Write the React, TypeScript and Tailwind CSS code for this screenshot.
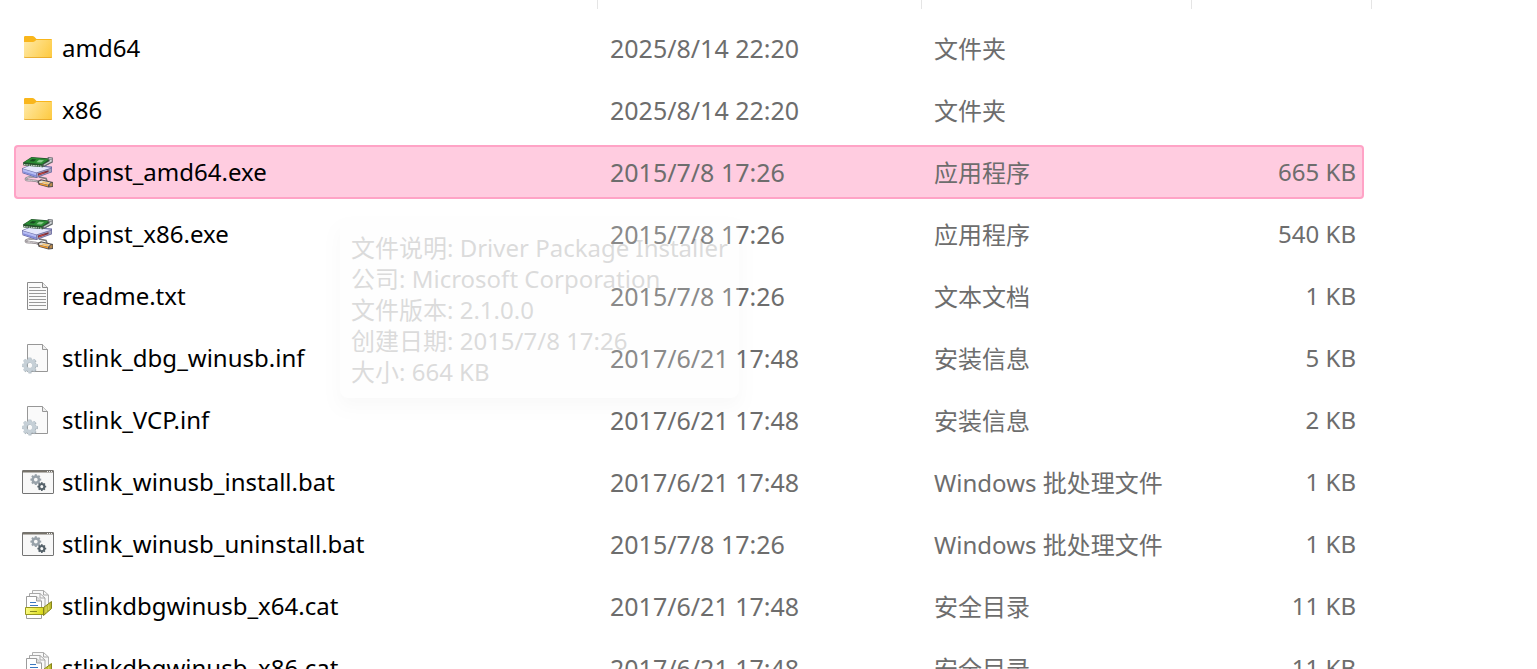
import { ReactNode } from "react";
import clsx from "clsx";

type FileKind = "folder" | "exe" | "txt" | "inf" | "bat" | "cat";

type FileItem = {
  name: string;
  date: string;
  type: string;
  size?: string;
  kind: FileKind;
};

const files: FileItem[] = [
  { name: "amd64", date: "2025/8/14 22:20", type: "文件夹", kind: "folder" },
  { name: "x86", date: "2025/8/14 22:20", type: "文件夹", kind: "folder" },
  { name: "dpinst_amd64.exe", date: "2015/7/8 17:26", type: "应用程序", size: "665 KB", kind: "exe" },
  { name: "dpinst_x86.exe", date: "2015/7/8 17:26", type: "应用程序", size: "540 KB", kind: "exe" },
  { name: "readme.txt", date: "2015/7/8 17:26", type: "文本文档", size: "1 KB", kind: "txt" },
  { name: "stlink_dbg_winusb.inf", date: "2017/6/21 17:48", type: "安装信息", size: "5 KB", kind: "inf" },
  { name: "stlink_VCP.inf", date: "2017/6/21 17:48", type: "安装信息", size: "2 KB", kind: "inf" },
  { name: "stlink_winusb_install.bat", date: "2017/6/21 17:48", type: "Windows 批处理文件", size: "1 KB", kind: "bat" },
  { name: "stlink_winusb_uninstall.bat", date: "2015/7/8 17:26", type: "Windows 批处理文件", size: "1 KB", kind: "bat" },
  { name: "stlinkdbgwinusb_x64.cat", date: "2017/6/21 17:48", type: "安全目录", size: "11 KB", kind: "cat" },
  { name: "stlinkdbgwinusb_x86.cat", date: "2017/6/21 17:48", type: "安全目录", size: "11 KB", kind: "cat" },
];

const selected = "dpinst_amd64.exe";

const details = [
  "文件说明: Driver Package Installer",
  "公司: Microsoft Corporation",
  "文件版本: 2.1.0.0",
  "创建日期: 2015/7/8 17:26",
  "大小: 664 KB",
];

function Svg({ children }: { children: ReactNode }) {
  return (
    <svg viewBox="0 0 32 32" className="h-8 w-8 shrink-0" fill="none" aria-hidden="true">
      {children}
    </svg>
  );
}

function Gear({ x, y, r, color }: { x: number; y: number; r: number; color: string }) {
  return (
    <g transform={`translate(${x} ${y})`}>
      <circle r={r * 0.58} stroke={color} strokeWidth={r * 0.46} />
      {[0, 45, 90, 135, 180, 225, 270, 315].map((angle) => (
        <rect
          key={angle}
          x={-r * 0.19}
          y={-r}
          width={r * 0.38}
          height={r * 0.36}
          fill={color}
          transform={`rotate(${angle})`}
        />
      ))}
    </g>
  );
}

function FolderIcon() {
  return (
    <Svg>
      <defs>
        <linearGradient id="folder" x1="2" y1="8" x2="30" y2="26" gradientUnits="userSpaceOnUse">
          <stop stopColor="#ffe9a6" />
          <stop offset="1" stopColor="#fdc93e" />
        </linearGradient>
      </defs>
      <path d="M2 5.2Q2 4 3.2 4H10.5Q11.5 4 12.3 4.8L14.5 7H29Q30 7 30 8V12H2Z" fill="#f9b61b" />
      <path d="M2 10H11Q12 10 12.8 9.3L14.2 8H30V25Q30 26 29 26H3Q2 26 2 25Z" fill="url(#folder)" />
      <path d="M2 24.6Q2 26 3 26H29Q30 26 30 24.6L29 25.2H3Z" fill="#e5a321" />
    </Svg>
  );
}

function InstallerIcon() {
  return (
    <Svg>
      {/* cable and plug */}
      <path d="M15 20.5C9 20.5 3 21.5 3.8 23.6C5 26 11 22.5 18 26.5" stroke="#8b8589" strokeWidth="2.2" />
      <path d="M15 20.5C9 20.5 3 21.5 3.8 23.6C5 26 11 22.5 18 26.5" stroke="#c9c4c8" strokeWidth="1" />
      <path d="M17 21L24 22.5L25 25" stroke="#77777c" strokeWidth="1.6" />
      <path d="M15.5 25L19 23.2L31 26V31L26.5 31.5L16.5 28.8Z" fill="#55504f" />
      <path d="M17 25.6L19.5 24.4L28.5 26.6L26 28.8L17 26.8Z" fill="#e2dcd3" />
      <path d="M17.5 27L26 29V30.6L18 28.6Z" fill="#f29a2c" />
      <path d="M21 25.4L27.6 26.8L26 28.2L20 26.8Z" fill="#f8c46c" />
      <path d="M27.8 27.8L30.3 26.8V30L27.4 30.6Z" fill="#b98a4c" />
      {/* drive box */}
      <path d="M0 12.2L8 9L30 10.5V16.2L14.5 22L0.5 17.2Z" fill="#6a6ba3" />
      <path d="M0.8 12.4L8.5 9.5L29.2 11.8L14.3 16.4Z" fill="#e5e8fd" />
      <path d="M0.8 13L14.2 17V21L1 16.6Z" fill="#b6bcf3" />
      <path d="M0.9 15.2L14.2 19.2V21L1 16.6Z" fill="#838bd9" />
      <path d="M14.8 17L29.3 12.4V15.8L14.8 21.1Z" fill="#a3a1bb" />
      <path d="M16 17.6L26.5 14.3V16L16 19.7Z" fill="#7b2b38" />
      <path d="M16.8 18L22.5 16.2V17L16.8 19Z" fill="#de5245" />
      {/* circuit board */}
      <path d="M1 6.5L9.5 1L28.5 2.5L28 7.5L20.8 11.2L1.5 9.5Z" fill="#24502b" />
      <path d="M2 6.2L9.8 1.6L26.8 3.2L20 8.2Z" fill="#2b8c34" />
      <path d="M10.2 3L14.4 3.5L11.8 5.6L7.4 5.2Z" fill="#174e20" />
      <path d="M17 3.8L22 4.2L19.2 6.6L14.4 6.2Z" fill="#8acb8c" />
      <path d="M2 8.6L20.2 10.3" stroke="#dce3da" strokeWidth="1" strokeDasharray="1.6 0.7" />
      <path d="M25.5 1L30.8 1.6V6.4L23.5 10L20.5 11.2V8.4L27 5Z" fill="#666b6e" />
      <path d="M26.8 2L29.8 2.3V5.6L22 9.6V8.6L28 5Z" fill="#cfd3d5" />
      <path d="M26.5 3.2L29.8 3.6" stroke="#7d8285" strokeWidth="0.8" />
    </Svg>
  );
}

function TextIcon() {
  return (
    <Svg>
      <path d="M5.5 2.5H20.5L25.5 7.5V29.5H5.5Z" fill="#fafafa" stroke="#8b8b8b" />
      <path d="M20.5 2.5V7.5H25.5" fill="#eee" stroke="#8b8b8b" />
      <path
        d="M7 7.5H18.5M7 10.5H24M7 13.5H24M7 16.5H24M7 19.5H24M7 22.5H24M7 25.5H24"
        stroke="#999"
      />
    </Svg>
  );
}

function SetupIcon() {
  return (
    <Svg>
      <path d="M5.5 2.5H20.5L25.5 7.5V29.5H5.5Z" fill="#fafafa" stroke="#979797" />
      <path d="M20.5 2.5V7.5H25.5" fill="#eee" stroke="#979797" />
      <Gear x={8} y={23.6} r={7.8} color="#a5b0b8" />
      <Gear x={7.4} y={23.2} r={7.6} color="#c6d0d7" />
    </Svg>
  );
}

function BatchIcon() {
  return (
    <Svg>
      <rect x="0.5" y="4.5" width="31" height="23" rx="0.5" fill="#f8f8f8" stroke="#747474" />
      <path d="M0.5 5.5H31.5" stroke="#77736a" strokeWidth="2" />
      <path d="M25 5.5H30.5" stroke="#eee" strokeDasharray="1 1" />
      <Gear x={13.8} y={13.6} r={5.4} color="#98a2aa" />
      <Gear x={19.8} y={20.6} r={4.4} color="#56626a" />
    </Svg>
  );
}

function CatalogIcon() {
  return (
    <Svg>
      <defs>
        <linearGradient id="catalog" x1="3" y1="18" x2="21" y2="26" gradientUnits="userSpaceOnUse">
          <stop stopColor="#ffff8e" />
          <stop offset="1" stopColor="#d6d60f" />
        </linearGradient>
      </defs>
      <path d="M10.5 0.5H21.5L26.5 5V19H10.5Z" fill="#f8f8f8" stroke="#b0b0b0" />
      <path d="M7.5 3.5H18L23 8V22H7.5Z" fill="#fafafa" stroke="#a8a8a8" />
      <path d="M18 3.5V8H23M21.5 0.5V5H26.5" stroke="#a8a8a8" />
      <path d="M4.5 6.5H14.5L19.5 11V28.5H4.5Z" fill="#fff" stroke="#9c9c9c" />
      <path d="M14.5 6.5V11H19.5" fill="#ddd" stroke="#9c9c9c" />
      <path d="M8 12.5H14M8 15.5H16" stroke="#3b78c0" />
      <path d="M3.5 17.5H21.5V24.5H3.5Z" fill="url(#catalog)" stroke="#98971e" />
      <path d="M21.5 17.5L29.5 11.5V18.5L21.5 25.5Z" fill="#bcba2b" stroke="#85841b" />
      <path d="M24 16.5V22.5M26.8 14.5V20" stroke="#e2e06c" />
      <path d="M8 21.5H15" stroke="#8a8a1a" />
    </Svg>
  );
}

const icons: Record<FileKind, () => ReactNode> = {
  folder: FolderIcon,
  exe: InstallerIcon,
  txt: TextIcon,
  inf: SetupIcon,
  bat: BatchIcon,
  cat: CatalogIcon,
};

function ColumnDividers() {
  return (
    <div className="mr-[165px] flex h-[9px]">
      <div className="grow border-r border-[#e5e5e5]" />
      <div className="w-[324px] border-r border-[#e5e5e5]" />
      <div className="w-[270px] border-r border-[#e5e5e5]" />
      <div className="w-[180px] border-r border-[#e5e5e5]" />
    </div>
  );
}

function FileRow({ file }: { file: FileItem }) {
  const Icon = icons[file.kind];
  const isSelected = file.name === selected;
  const cell = clsx(
    "h-[54px] border-y-2 py-0",
    isSelected ? "border-[#ffa3c6] bg-[#ffcce0]" : "border-transparent"
  );

  return (
    <tr aria-selected={isSelected}>
      <td className={clsx(cell, "rounded-l-sm border-l-2 pl-1.5 text-black")}>
        <div className="flex items-center gap-2">
          <Icon />
          <span>{file.name}</span>
        </div>
      </td>
      <td className={clsx(cell, "pl-3 text-[25px]")}>{file.date}</td>
      <td className={clsx(cell, "pl-3")}>
        <div className="pt-0.5">{file.type}</div>
      </td>
      <td className={clsx(cell, "rounded-r-sm border-r-2 pr-1.5 text-right")}>{file.size}</td>
    </tr>
  );
}

function DetailsTooltip() {
  return (
    <div
      role="tooltip"
      className="absolute top-[222px] left-[340px] rounded-lg bg-[#fcfcfc] px-[11px] pt-2.5 pb-[11px] leading-[31px] text-[#505050] opacity-20 shadow-[0_8px_16px_rgba(0,0,0,0.12)]"
    >
      {details.map((line) => (
        <div key={line}>{line}</div>
      ))}
    </div>
  );
}

export default function App() {
  return (
    <main className="relative h-screen overflow-hidden bg-white font-['Noto_Sans','Noto_Sans_CJK_SC',sans-serif] text-[24px] leading-8 whitespace-nowrap text-[#6d6d6d]">
      <ColumnDividers />
      <div className="mt-1 mr-[173px] ml-3.5">
        <table className="w-full table-fixed border-separate border-spacing-x-0 border-spacing-y-2">
          <colgroup>
            <col />
            <col className="w-[324px]" />
            <col className="w-[270px]" />
            <col className="w-[172px]" />
          </colgroup>
          <tbody>
            {files.map((file) => (
              <FileRow key={file.name} file={file} />
            ))}
          </tbody>
        </table>
      </div>
      <DetailsTooltip />
    </main>
  );
}
